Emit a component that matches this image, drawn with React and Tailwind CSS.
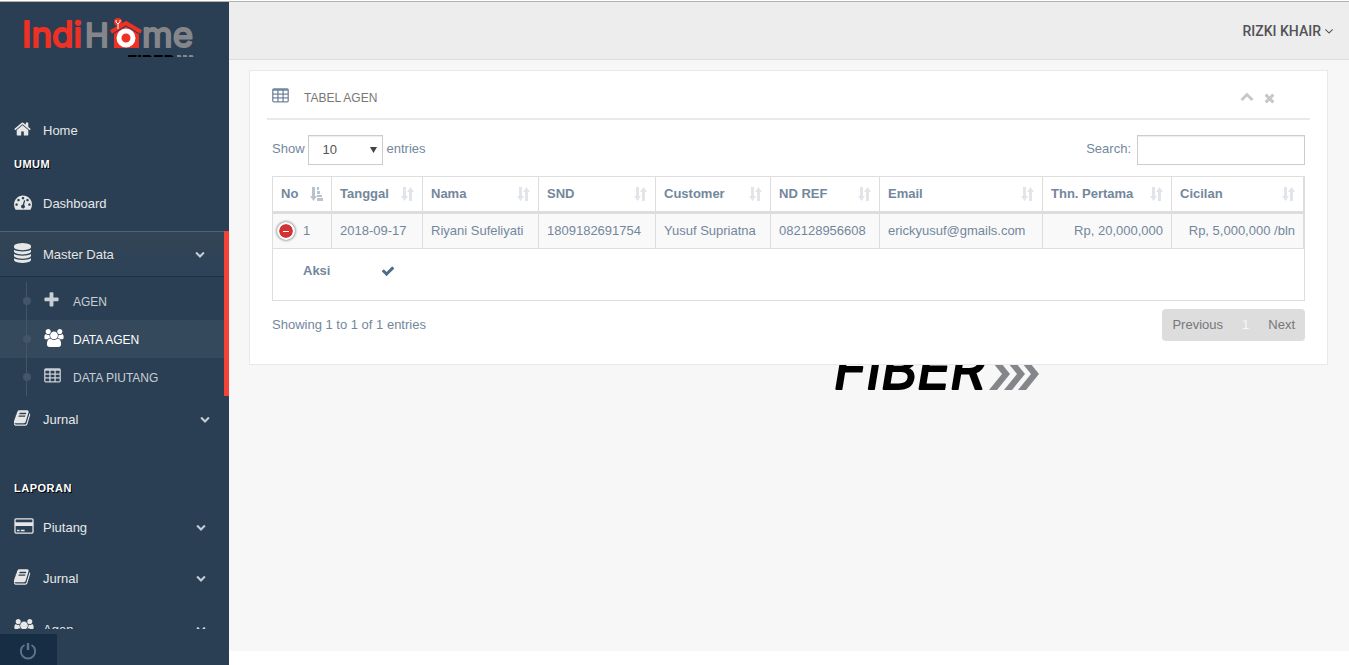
import React from "react";

const ICONS = {
  home: {
    box: "64 0 1664 1792",
    d: "M1472 992v480q0 26-19 45t-45 19h-384v-384h-256v384h-384q-26 0-45-19t-19-45v-480q0-1 .5-3t.5-3l575-474 575 474q1 2 1 6zm223-69l-62 74q-8 9-21 11h-3q-13 0-21-7l-692-577-692 577q-12 8-24 7-13-2-21-11l-62-74q-8-10-7-23.5t11-21.5l719-599q32-26 76-26t76 26l244 204v-195q0-14 9-23t23-9h192q14 0 23 9t9 23v408l219 182q10 8 11 21.5t-7 23.5z",
  },
  dashboard: {
    box: "0 0 1792 1792",
    d: "M384 1152q0-53-37.5-90.5t-90.5-37.5-90.5 37.5-37.5 90.5 37.5 90.5 90.5 37.5 90.5-37.5 37.5-90.5zm192-448q0-53-37.5-90.5t-90.5-37.5-90.5 37.5-37.5 90.5 37.5 90.5 90.5 37.5 90.5-37.5 37.5-90.5zm428 481l101-382q6-26-7.5-48.5t-38.5-29.5-48 6.5-30 39.5l-101 382q-60 5-107 43.5t-63 98.5q-20 77 20 146t117 89 146-20 89-117q16-60-6-117t-72-91zm660-33q0-53-37.5-90.5t-90.5-37.5-90.5 37.5-37.5 90.5 37.5 90.5 90.5 37.5 90.5-37.5 37.5-90.5zm-640-640q0-53-37.5-90.5t-90.5-37.5-90.5 37.5-37.5 90.5 37.5 90.5 90.5 37.5 90.5-37.5 37.5-90.5zm448 192q0-53-37.5-90.5t-90.5-37.5-90.5 37.5-37.5 90.5 37.5 90.5 90.5 37.5 90.5-37.5 37.5-90.5zm320 448q0 261-141 483-19 29-54 29h-1402q-35 0-54-29-141-221-141-483 0-182 71-348t191-286 286-191 348-71 348 71 286 191 191 286 71 348z",
  },
  database: {
    box: "128 0 1536 1792",
    d: "M896 768q237 0 443-43t325-127v170q0 69-103 128t-280 93.5-385 34.5-385-34.5-280-93.5-103-128v-170q119 84 325 127t443 43zm0 768q237 0 443-43t325-127v170q0 69-103 128t-280 93.5-385 34.5-385-34.5-280-93.5-103-128v-170q119 84 325 127t443 43zm0-384q237 0 443-43t325-127v170q0 69-103 128t-280 93.5-385 34.5-385-34.5-280-93.5-103-128v-170q119 84 325 127t443 43zm0-1152q208 0 385 34.5t280 93.5 103 128v128q0 69-103 128t-280 93.5-385 34.5-385-34.5-280-93.5-103-128v-128q0-69 103-128t280-93.5 385-34.5z",
  },
  plus: {
    box: "192 0 1408 1792",
    d: "M1600 736v192q0 40-28 68t-68 28h-416v416q0 40-28 68t-68 28h-192q-40 0-68-28t-28-68v-416h-416q-40 0-68-28t-28-68v-192q0-40 28-68t68-28h416v-416q0-40 28-68t68-28h192q40 0 68 28t28 68v416h416q40 0 68 28t28 68z",
  },
  users: {
    box: "0 0 1920 1792",
    d: "M593 896q-162 5-265 128h-134q-82 0-138-40.5t-56-118.5q0-353 124-353 6 0 43.5 21t97.5 42.5 119 21.5q67 0 133-23-5 37-5 66 0 139 81 256zm1071 637q0 120-73 189.5t-194 69.5h-874q-121 0-194-69.5t-73-189.5q0-53 3.5-103.5t14-109 26.5-108.5 43-97.5 62-81 85.5-53.5 111.5-20q10 0 43 21.5t73 48 107 48 135 21.5 135-21.5 107-48 73-48 43-21.5q61 0 111.5 20t85.5 53.5 62 81 43 97.5 26.5 108.5 14 109 3.5 103.5zm-1024-1277q0 106-75 181t-181 75-181-75-75-181 75-181 181-75 181 75 75 181zm704 384q0 159-112.5 271.5t-271.5 112.5-271.5-112.5-112.5-271.5 112.5-271.5 271.5-112.5 271.5 112.5 112.5 271.5zm576 225q0 78-56 118.5t-138 40.5h-134q-103-123-265-128 81-117 81-256 0-29-5-66 66 23 133 23 59 0 119-21.5t97.5-42.5 43.5-21q124 0 124 353zm-128-609q0 106-75 181t-181 75-181-75-75-181 75-181 181-75 181 75 75 181z",
  },
  table: {
    box: "64 0 1664 1792",
    d: "M576 1376v-192q0-14-9-23t-23-9h-320q-14 0-23 9t-9 23v192q0 14 9 23t23 9h320q14 0 23-9t9-23zm0-384v-192q0-14-9-23t-23-9h-320q-14 0-23 9t-9 23v192q0 14 9 23t23 9h320q14 0 23-9t9-23zm512 384v-192q0-14-9-23t-23-9h-320q-14 0-23 9t-9 23v192q0 14 9 23t23 9h320q14 0 23-9t9-23zm-512-768v-192q0-14-9-23t-23-9h-320q-14 0-23 9t-9 23v192q0 14 9 23t23 9h320q14 0 23-9t9-23zm512 384v-192q0-14-9-23t-23-9h-320q-14 0-23 9t-9 23v192q0 14 9 23t23 9h320q14 0 23-9t9-23zm512 384v-192q0-14-9-23t-23-9h-320q-14 0-23 9t-9 23v192q0 14 9 23t23 9h320q14 0 23-9t9-23zm-512-768v-192q0-14-9-23t-23-9h-320q-14 0-23 9t-9 23v192q0 14 9 23t23 9h320q14 0 23-9t9-23zm512 384v-192q0-14-9-23t-23-9h-320q-14 0-23 9t-9 23v192q0 14 9 23t23 9h320q14 0 23-9t9-23zm0-384v-192q0-14-9-23t-23-9h-320q-14 0-23 9t-9 23v192q0 14 9 23t23 9h320q14 0 23-9t9-23zm128-320v1088q0 66-47 113t-113 47h-1344q-66 0-113-47t-47-113v-1088q0-66 47-113t113-47h1344q66 0 113 47t47 113z",
  },
  book: {
    box: "64 0 1664 1792",
    d: "M1639 478q40 57 18 129l-275 906q-19 64-76.5 107.5t-122.5 43.5h-923q-77 0-148.5-53.5t-99.5-131.5q-24-67-2-127 0-4 3-27t4-37q1-8-3-21.5t-3-19.5q2-11 8-21t16.5-23.5 16.5-23.5q23-38 45-91.5t30-91.5q3-10 .5-30t-.5-28q3-11 17-28t17-23q21-36 42-92t25-90q1-9-2.5-32t.5-28q4-13 22-30.5t22-22.5q19-26 42.5-84.5t27.5-96.5q1-8-3-25.5t-2-26.5q2-8 9-18t18-23 17-21q8-12 16.5-30.5t15-35 16-36 19.5-32 26.5-23.5 36-11.5 47.5 5.5l-1 3q38-9 51-9h761q74 0 114 56t18 130l-274 906q-36 119-71.5 153.5t-128.5 34.5h-869q-27 0-38 15-11 16-1 43 24 70 144 70h923q29 0 56-15.5t35-41.5l300-987q7-22 5-57 38 15 59 43zm-1064 2q-4 13 2 22.5t20 9.5h608q13 0 25.5-9.5t16.5-22.5l21-64q4-13-2-22.5t-20-9.5h-608q-13 0-25.5 9.5t-16.5 22.5zm-83 256q-4 13 2 22.5t20 9.5h608q13 0 25.5-9.5t16.5-22.5l21-64q4-13-2-22.5t-20-9.5h-608q-13 0-25.5 9.5t-16.5 22.5z",
  },
  card: {
    box: "0 0 1920 1792",
    d: "M1760 128q66 0 113 47t47 113v1216q0 66-47 113t-113 47h-1600q-66 0-113-47t-47-113v-1216q0-66 47-113t113-47h1600zm-1600 128q-13 0-22.5 9.5t-9.5 22.5v224h1664v-224q0-13-9.5-22.5t-22.5-9.5h-1600zm1600 1280q13 0 22.5-9.5t9.5-22.5v-608h-1664v608q0 13 9.5 22.5t22.5 9.5h1600zm-1504-128v-128h256v128h-256zm384 0v-128h384v128h-384z",
  },
  chevron: {
    box: "0 0 1792 1792",
    d: "M1683 808l-742 741q-19 19-45 19t-45-19l-742-741q-19-19-19-45.5t19-45.5l166-165q19-19 45-19t45 19l531 531 531-531q19-19 45-19t45 19l166 165q19 19 19 45.5t-19 45.5z",
  },
  angle: {
    box: "384 0 1024 1792",
    d: "M1395 736q0 13-10 23l-466 466q-10 10-23 10t-23-10l-466-466q-10-10-10-23t10-23l50-50q10-10 23-10t23 10l393 393 393-393q10-10 23-10t23 10l50 50q10 10 10 23z",
  },
  check: {
    box: "0 0 1792 1792",
    d: "M1671 566q0 40-28 68l-724 724-136 136q-28 28-68 28t-68-28l-136-136-362-362q-28-28-28-68t28-68l136-136q28-28 68-28t68 28l294 295 656-657q28-28 68-28t68 28l136 136q28 28 28 68z",
  },
  close: {
    box: "192 0 1408 1792",
    d: "M1490 1322q0 40-28 68l-136 136q-28 28-68 28t-68-28l-294-294-294 294q-28 28-68 28t-68-28l-136-136q-28-28-28-68t28-68l294-294-294-294q-28-28-28-68t28-68l136-136q28-28 68-28t68 28l294 294 294-294q28-28 68-28t68 28l136 136q28 28 28 68t-28 68l-294 294 294 294q28 28 28 68z",
  },
};

function Icon({ name, className }) {
  const icon = ICONS[name];
  return (
    <svg viewBox={icon.box} className={`shrink-0 fill-current ${className}`} aria-hidden="true">
      <path d={icon.d} />
    </svg>
  );
}

function Logo() {
  return (
    <svg viewBox="0 0 180 41" className="h-[41px] w-[180px]" role="img" aria-label="IndiHome Fiber">
      <g fontFamily="Inter, sans-serif" fontWeight="400" fontSize="35" strokeWidth="2" strokeLinejoin="round">
        <text x="0" y="31" fill="#ee3124" stroke="#ee3124">Indi</text>
        <text x="63" y="31" fill="#85868a" stroke="#85868a" fontSize="32">H</text>
        <text x="120" y="31" fill="#85868a" stroke="#85868a">me</text>
      </g>
      <path d="M92 17 104 10l13 7v15H92z" fill="#ee3124" />
      <path d="M89 16 104 7l15 9" fill="none" stroke="#2a3f54" strokeWidth="6" />
      <path d="M89 16 104 7l15 9" fill="none" stroke="#ee3124" strokeWidth="4" />
      <circle cx="96" cy="6" r="4" fill="#ee3124" />
      <path d="M94 4v2l2 2 2-2V4M96 7v6" fill="none" stroke="#fff" strokeWidth="1" />
      <circle cx="104" cy="22" r="7" fill="#ee3124" stroke="#fff" strokeWidth="5" />
      <text x="104" y="52" fill="#000" fontFamily="Inter, sans-serif" fontWeight="800" fontStyle="italic" fontSize="17">FIBER</text>
      <path d="M155 40h3l1 2M161 40h3l1 2M167 40h3l1 2" fill="none" stroke="#85868a" strokeWidth="2" />
    </svg>
  );
}

function FiberMark() {
  return (
    <svg viewBox="0 0 206 52" className="h-[52px] w-[206px]" role="img" aria-label="Fiber">
      <text x="1" y="48" fontFamily="Inter, sans-serif" fontWeight="400" fontStyle="italic" fontSize="55" stroke="#000" strokeWidth="2" strokeLinejoin="round">FIBER</text>
      <path
        d="M156 17h8l13 16-13 16h-8l13-16zM171 17h8l13 16-13 16h-8l13-16zM185 17h8l13 16-13 16h-8l13-16z"
        fill="#85868a"
      />
    </svg>
  );
}

function MenuRow({ icon, label, expandable, inset, iconClass }) {
  return (
    <a href="#" className="mb-[6px] flex h-[45px] items-center pr-[19px] pl-[14px] text-[13px] text-[#e7e7e7]">
      <span className="w-[29px] pb-[2px]">
        <Icon name={icon} className={`h-[18px] ${iconClass}`} />
      </span>
      <span className="flex-1 pt-[2px]">{label}</span>
      {expandable && <Icon name="chevron" className={`size-[10px] text-[#c4cfda] ${inset ? "mr-1" : ""}`} />}
    </a>
  );
}

function MenuHeading({ children }) {
  return (
    <h3 className="mb-[10px] pl-[14px] text-[11px] leading-[12px] font-bold tracking-[.5px] text-white uppercase [text-shadow:1px_1px_#000]">
      {children}
    </h3>
  );
}

const SUBMENU = [
  { label: "AGEN", icon: "plus", iconClass: "w-[15px]" },
  { label: "DATA AGEN", icon: "users", iconClass: "w-[20px]", current: true },
  { label: "DATA PIUTANG", icon: "table", iconClass: "w-[17px]" },
];

function Sidebar() {
  return (
    <aside className="flex h-[calc(100vh-2px)] w-[229px] shrink-0 flex-col bg-[#2a3f54]">
      <a href="#" className="flex h-[105px] shrink-0 items-start pt-[14px] pl-[22px]">
        <Logo />
      </a>
      <nav className="min-h-0 flex-1 overflow-hidden">
        <MenuRow icon="home" iconClass="w-[17px]" label="Home" />
        <MenuHeading>Umum</MenuHeading>
        <MenuRow icon="dashboard" iconClass="w-[18px]" label="Dashboard" />
        <div className="border-r-[5px] border-[#f44336]">
          <a
            href="#"
            className="mb-[6px] flex h-[45px] items-center bg-linear-to-b from-[#334556] to-[#2c4257] pr-[19px] pl-[14px] text-[13px] text-[#e7e7e7] shadow-[0_1px_0_rgba(0,0,0,0.25),inset_0_1px_0_rgba(255,255,255,0.16)] [text-shadow:0_1px_0_rgba(0,0,0,0.25)]"
          >
            <span className="w-[29px] pb-[2px]">
              <Icon name="database" className="h-[20px] w-[17px]" />
            </span>
            <span className="flex-1 pt-[2px]">Master Data</span>
            <Icon name="chevron" className="size-[10px] text-[#c4cfda]" />
          </a>
          <ul>
            {SUBMENU.map((item) => (
              <li key={item.label} className={item.current ? "bg-[#35495d]" : ""}>
                <a
                  href="#"
                  className={`flex h-[38px] items-center text-[12px] ${item.current ? "text-white" : "text-[rgba(255,255,255,0.75)]"}`}
                >
                  <span className="flex w-[44px] justify-center self-stretch pr-[9px] pl-[18px]">
                    <span className="flex w-px items-center justify-center bg-[#425668]">
                      <span className="size-2 shrink-0 rounded-full bg-[#425668]" />
                    </span>
                  </span>
                  <span className="w-[29px] pb-[3px]">
                    <Icon name={item.icon} className={`h-[18px] ${item.iconClass}`} />
                  </span>
                  <span className="pt-px">{item.label}</span>
                </a>
              </li>
            ))}
          </ul>
        </div>
        <MenuRow icon="book" iconClass="w-[17px]" label="Jurnal" expandable />
        <div className="pt-[35px]">
          <MenuHeading>Laporan</MenuHeading>
          <MenuRow icon="card" iconClass="w-[20px]" label="Piutang" expandable inset />
          <MenuRow icon="book" iconClass="w-[17px]" label="Jurnal" expandable inset />
          <MenuRow icon="users" iconClass="w-[20px]" label="Agen" expandable inset />
        </div>
      </nav>
      <div className="shrink-0 pt-[5px]">
        <button type="button" aria-label="Logout" className="flex h-[31px] w-[57px] items-center justify-center bg-[#172d44] pt-[2px] pr-[2px] text-[#5a738e]">
          <svg viewBox="0 0 18 18" className="size-[18px]" fill="none" stroke="currentColor" strokeWidth="2" aria-hidden="true">
            <path d="M5.5 3A7.2 7.2 0 1 0 12.5 3" />
            <path d="M9 1v7" strokeWidth="2.5" />
          </svg>
        </button>
      </div>
    </aside>
  );
}

function SortIcon({ sorted }) {
  return (
    <svg viewBox="0 0 13 14" className={`h-[14px] w-[13px] shrink-0 fill-current ${sorted ? "text-[#b9c3cd]" : "text-[#e1e5ea]"}`} aria-hidden="true">
      <path d="M2 0h3v9h2l-3.5 5L0 9h2z" />
      {sorted ? <path d="M7 0h2v3H7zM7 4h3v3H7zM7 8h5v2H7zM7 11h6v3H7z" /> : <path d="M8 14h3V5h2L9.5 0 6 5h2z" />}
    </svg>
  );
}

const COLUMNS = [
  { title: "No", width: "w-[59px]", sorted: true },
  { title: "Tanggal", width: "w-[91px]" },
  { title: "Nama", width: "w-[116px]" },
  { title: "SND", width: "w-[117px]" },
  { title: "Customer", width: "w-[115px]" },
  { title: "ND REF", width: "w-[109px]" },
  { title: "Email", width: "w-[163px]" },
  { title: "Thn. Pertama", width: "w-[129px]" },
  { title: "Cicilan", width: "w-[132px]" },
];

const CELLS = [
  { text: "2018-09-17" },
  { text: "Riyani Sufeliyati" },
  { text: "1809182691754" },
  { text: "Yusuf Supriatna" },
  { text: "082128956608" },
  { text: "erickyusuf@gmails.com" },
  { text: "Rp, 20,000,000", right: true },
  { text: "Rp, 5,000,000 /bln", right: true },
];

function AgentTable() {
  return (
    <table className="mt-[11px] w-full table-fixed border-separate border-spacing-0 border border-[#ddd] whitespace-nowrap">
      <colgroup>
        {COLUMNS.map((c) => (
          <col key={c.title} className={c.width} />
        ))}
      </colgroup>
      <thead>
        <tr>
          {COLUMNS.map((c) => (
            <th key={c.title} scope="col" className="h-[37px] border-r border-b-3 border-[#ddd] px-2 py-0 text-left font-bold">
              <span className="flex items-center justify-between">
                {c.title}
                <SortIcon sorted={c.sorted} />
              </span>
            </th>
          ))}
        </tr>
      </thead>
      <tbody>
        <tr className="bg-[#f9f9f9]">
          <td className="h-[35px] border-r border-b border-[#ddd] p-0 pl-[4px]">
            <span className="flex items-center gap-2">
              <button
                type="button"
                aria-label="Collapse row"
                className="flex size-[18px] items-center justify-center rounded-full border-2 border-white bg-[#d33333] bg-clip-padding shadow-[0_0_3px_#444]"
              >
                <span className="h-px w-[6px] bg-white" />
              </button>
              1
            </span>
          </td>
          {CELLS.map((cell) => (
            <td key={cell.text} className={`border-r border-b border-[#ddd] px-2 py-0 ${cell.right ? "text-right" : ""}`}>
              {cell.text}
            </td>
          ))}
        </tr>
        <tr>
          <td colSpan={9} className="h-[51px] px-[30px] pt-0 pb-2">
            <span className="flex items-center">
              <span className="w-[78px] font-bold">Aksi</span>
              <a href="#" aria-label="Pilih" className="text-[#4f6b88]">
                <Icon name="check" className="size-[14px]" />
              </a>
            </span>
          </td>
        </tr>
      </tbody>
    </table>
  );
}

function AgentPanel() {
  return (
    <section className="relative z-10 border border-[#e6e9ed] bg-white px-[17px] pt-[6px] pb-[23px]">
      <header className="flex h-[43px] items-center border-b-2 border-[#e6e9ed] pr-[35px] pl-[5px]">
        <Icon name="table" className="mb-1 h-[18px] w-[17px]" />
        <h2 className="ml-[15px] flex-1 text-[12px] text-[#777]">TABEL AGEN</h2>
        <span className="flex gap-[10px] text-[#c5c7cb]">
          <button type="button" aria-label="Collapse">
            <Icon name="chevron" className="size-[14px] rotate-180" />
          </button>
          <button type="button" aria-label="Close">
            <Icon name="close" className="h-[14px] w-[11px]" />
          </button>
        </span>
      </header>
      <div className="px-[5px] pt-[15px]">
        <div className="flex items-center justify-between">
          <div className="flex items-center gap-[3px]">
            <label htmlFor="page-size" className="pb-[2px]">Show</label>
            <span className="relative">
              <select
                id="page-size"
                defaultValue="10"
                className="block h-[30px] w-[75px] appearance-none border border-[#ccc] bg-white pl-[14px] text-[#555] shadow-[inset_0_1px_1px_rgba(0,0,0,0.075)]"
              >
                <option>10</option>
                <option>25</option>
                <option>50</option>
                <option>100</option>
              </select>
              <svg viewBox="0 0 7 6" className="pointer-events-none absolute top-3 right-[6px] h-[6px] w-[7px] fill-[#444]" aria-hidden="true">
                <path d="M0 0h7L3.5 6z" />
              </svg>
            </span>
            <span className="pb-[2px] pl-px">entries</span>
          </div>
          <div className="flex items-center gap-[6px]">
            <label htmlFor="search" className="pb-[2px]">Search:</label>
            <input
              id="search"
              type="search"
              className="h-[30px] w-[168px] border border-[#ccc] bg-white px-2 shadow-[inset_0_1px_1px_rgba(0,0,0,0.075)]"
            />
          </div>
        </div>
        <AgentTable />
        <div className="mt-2 flex items-center justify-between">
          <p>Showing 1 to 1 of 1 entries</p>
          <div className="flex h-8 items-center rounded bg-[#ddd] text-[#777]">
            <button type="button" className="px-[10px]">Previous</button>
            <button type="button" className="px-[9px] text-[#f7f7f7]" aria-current="page">1</button>
            <button type="button" className="px-[10px]">Next</button>
          </div>
        </div>
      </div>
    </section>
  );
}

export default function App() {
  return (
    <div className="min-h-screen border-t border-white bg-white font-['Liberation_Sans',Arial,sans-serif] text-[13px] leading-[18px] text-[#73879c]">
      <div className="flex border-t border-[#b0b0b0]">
        <Sidebar />
        <div className="flex h-[calc(100vh-2px)] min-w-0 flex-1 flex-col pb-[14px]">
          <header className="flex h-[58px] shrink-0 items-center justify-end border-b border-[#d9dee4] bg-[#ededed] pr-4">
            <button type="button" className="flex items-center gap-1 font-[Roboto,sans-serif] text-[14px] font-medium text-[#515356]">
              RIZKI KHAIR
              <Icon name="angle" className="h-[14px] w-2" />
            </button>
          </header>
          <main className="flex-1 bg-[#f7f7f7] pt-[10px] pr-[21px] pl-5">
            <AgentPanel />
            <div className="-mt-[24px] flex justify-center">
              <div className="flex w-[500px] justify-end">
                <FiberMark />
              </div>
            </div>
          </main>
        </div>
      </div>
    </div>
  );
}
